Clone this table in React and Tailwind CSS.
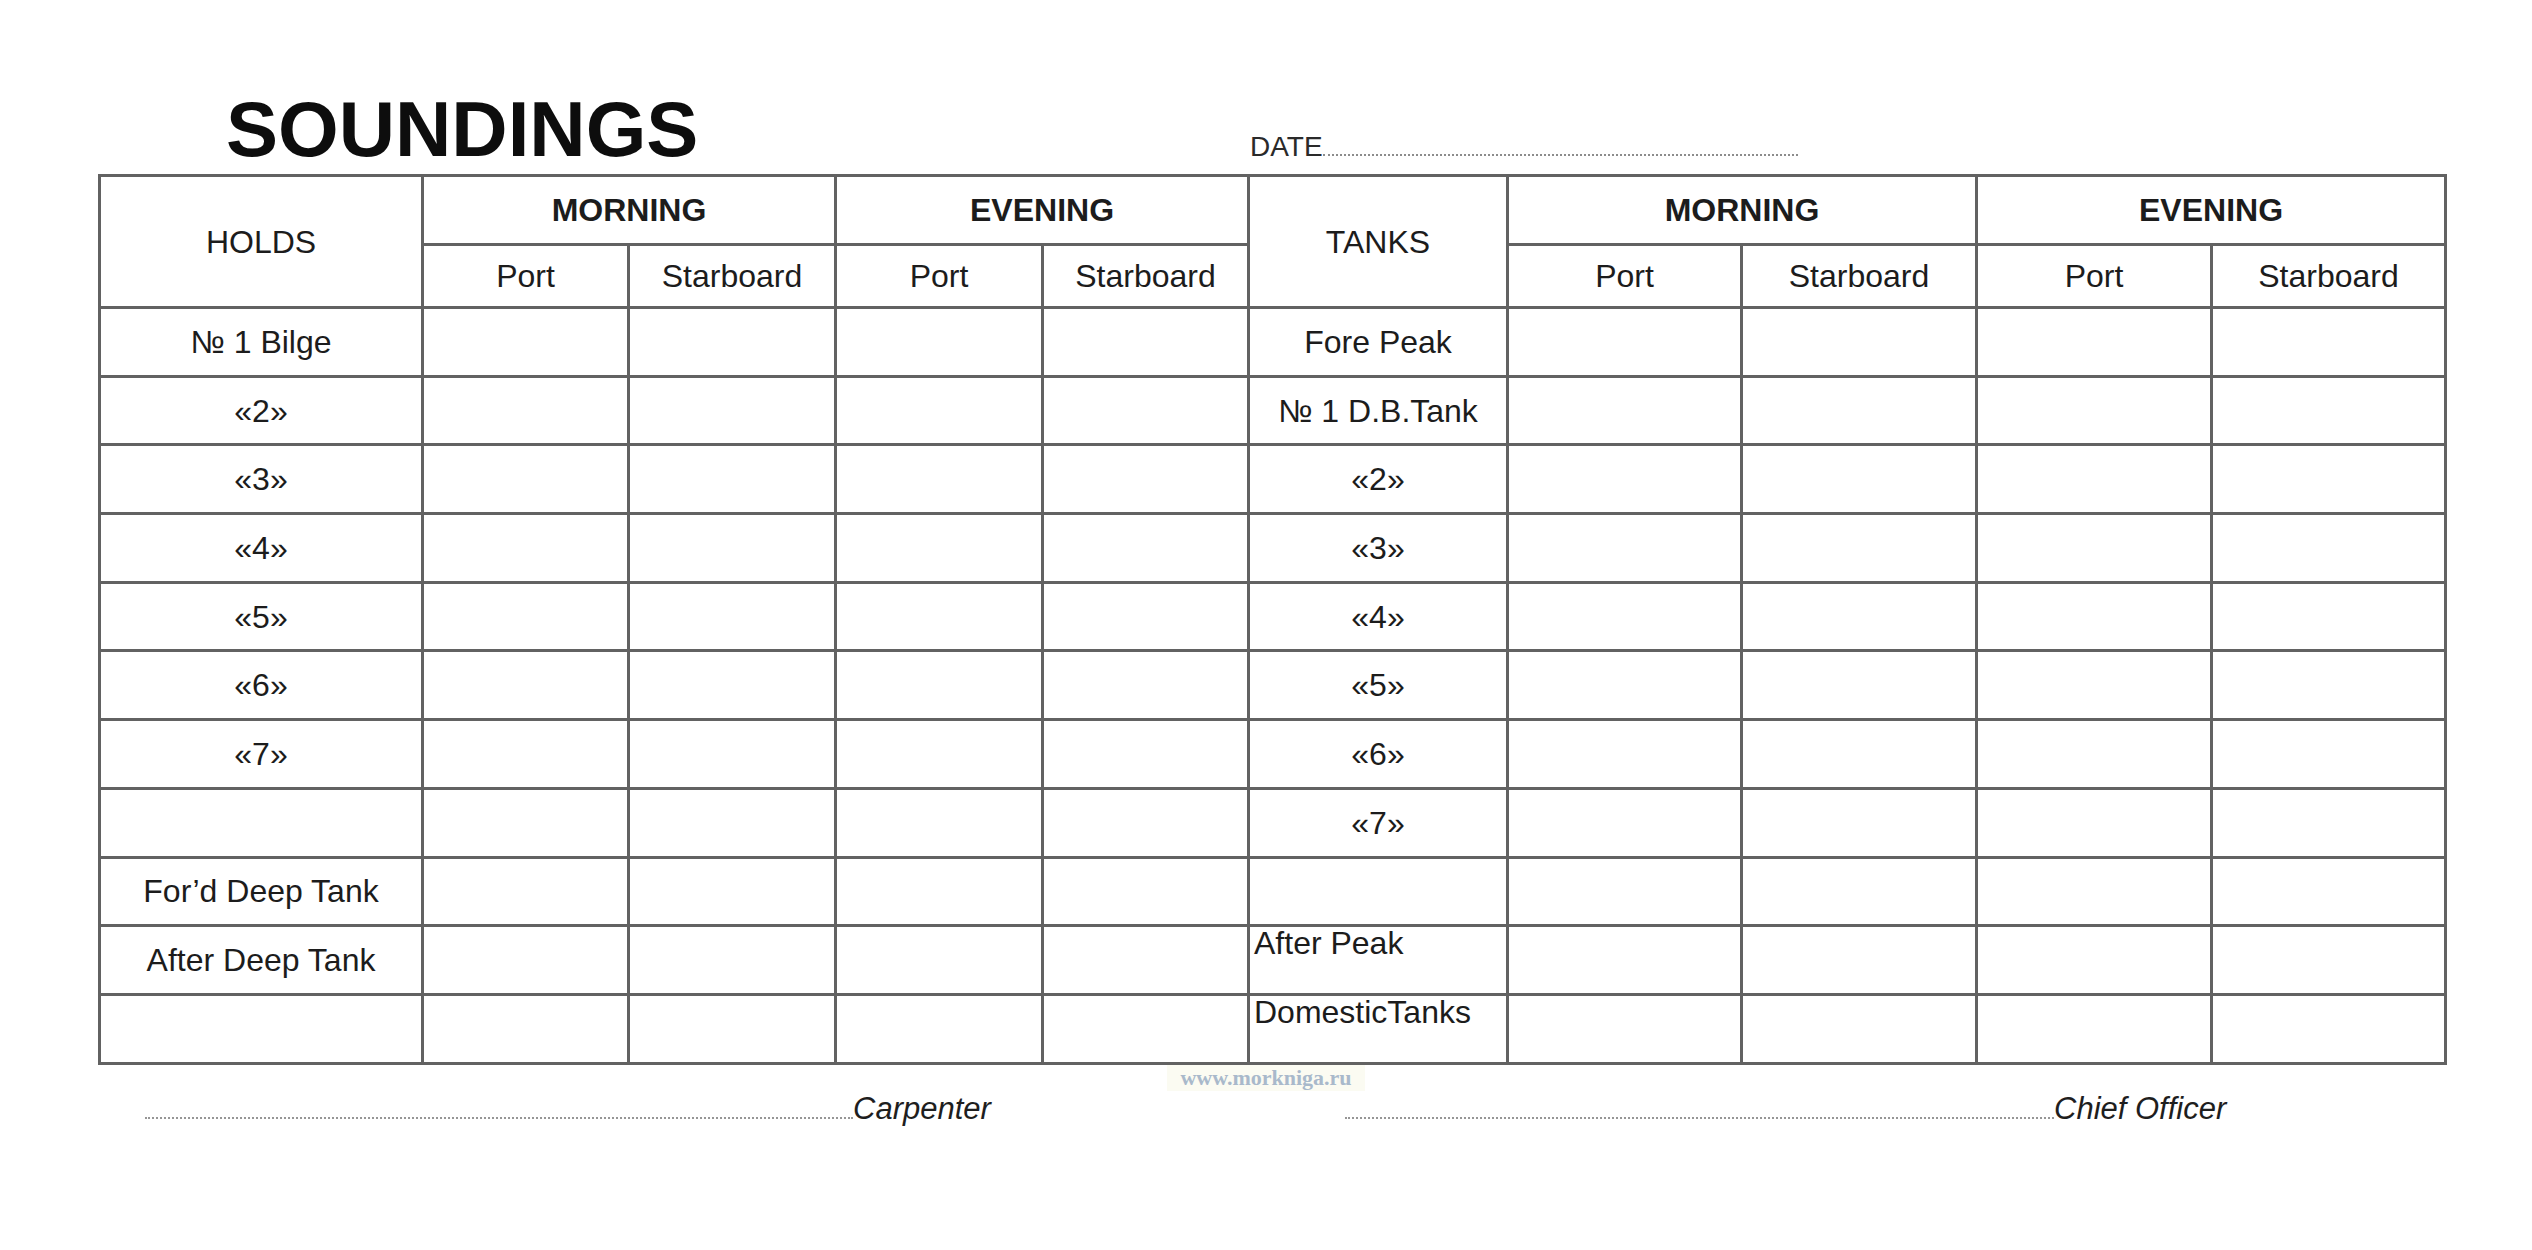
import React from 'react';

const holds = ['№ 1 Bilge', '«2»', '«3»', '«4»', '«5»', '«6»', '«7»', '', 'For’d Deep Tank', 'After Deep Tank', ''];
const tanks = ['Fore Peak', '№ 1 D.B.Tank', '«2»', '«3»', '«4»', '«5»', '«6»', '«7»', '', 'After Peak', 'DomesticTanks'];

// tank rows whose label sits top-left instead of centred
const topLeft = ['After Peak', 'DomesticTanks'];

const Cell = ({ children, className = '' }) => (
    <div className={`bg-white flex items-center justify-center text-[32px] leading-none text-[#1c1c1c] ${className}`}>
        {children}
    </div>
);

const App = () => {
    return (
        <div className="w-[2532px] h-[1250px] bg-white overflow-hidden" style={{ fontFamily: '"Liberation Sans", Arial, sans-serif' }}>
            <div className="flex items-baseline h-[174px] pt-[90px]">
                <h1 className="ml-[226px] w-[1024px] text-[78px] font-bold leading-none text-[#0d0d0d]">SOUNDINGS</h1>
                <div className="flex items-baseline text-[28px] leading-none text-[#2a2a2a]">
                    <span>DATE</span>
                    <span className="inline-block w-[475px] border-b-2 border-dotted border-[#8c8c8c]" />
                </div>
            </div>

            <div className="ml-[98px] w-[2349px] grid gap-[3px] p-[3px] bg-[#626262] grid-cols-[320px_203px_204px_204px_203px_256px_231px_232px_232px_231px] grid-rows-[66px_60px_repeat(11,65.7px)]">
                <Cell className="row-span-2">HOLDS</Cell>
                <Cell className="col-span-2 font-bold">MORNING</Cell>
                <Cell className="col-span-2 font-bold">EVENING</Cell>
                <Cell className="row-span-2">TANKS</Cell>
                <Cell className="col-span-2 font-bold">MORNING</Cell>
                <Cell className="col-span-2 font-bold">EVENING</Cell>

                <Cell>Port</Cell>
                <Cell>Starboard</Cell>
                <Cell>Port</Cell>
                <Cell>Starboard</Cell>
                <Cell>Port</Cell>
                <Cell>Starboard</Cell>
                <Cell>Port</Cell>
                <Cell>Starboard</Cell>

                {holds.map((h, r) => (
                    <React.Fragment key={r}>
                        <Cell>{h}</Cell>
                        <Cell />
                        <Cell />
                        <Cell />
                        <Cell />
                        {topLeft.includes(tanks[r]) ? (
                            <div className="bg-white text-[32px] leading-none text-[#1c1c1c] pl-[4px]">{tanks[r]}</div>
                        ) : (
                            <Cell>{tanks[r]}</Cell>
                        )}
                        <Cell />
                        <Cell />
                        <Cell />
                        <Cell />
                    </React.Fragment>
                ))}
            </div>

            <div className="ml-[1167px] w-[198px] h-[26px] bg-[#fbfbf2] flex items-center justify-center">
                <span className="text-[22px] font-bold leading-none text-[#a9b9cb]" style={{ fontFamily: '"Liberation Serif", "Times New Roman", serif' }}>
                    www.morkniga.ru
                </span>
            </div>

            <div className="flex items-baseline mt-[2px] text-[31px] italic leading-none text-[#1e1e1e]">
                <div className="ml-[145px] w-[1200px] flex items-baseline">
                    <span className="inline-block w-[708px] border-b-2 border-dotted border-[#969696]" />
                    <span>Carpenter</span>
                </div>
                <div className="flex items-baseline">
                    <span className="inline-block w-[709px] border-b-2 border-dotted border-[#969696]" />
                    <span>Chief Officer</span>
                </div>
            </div>
        </div>
    );
};

export default App;
